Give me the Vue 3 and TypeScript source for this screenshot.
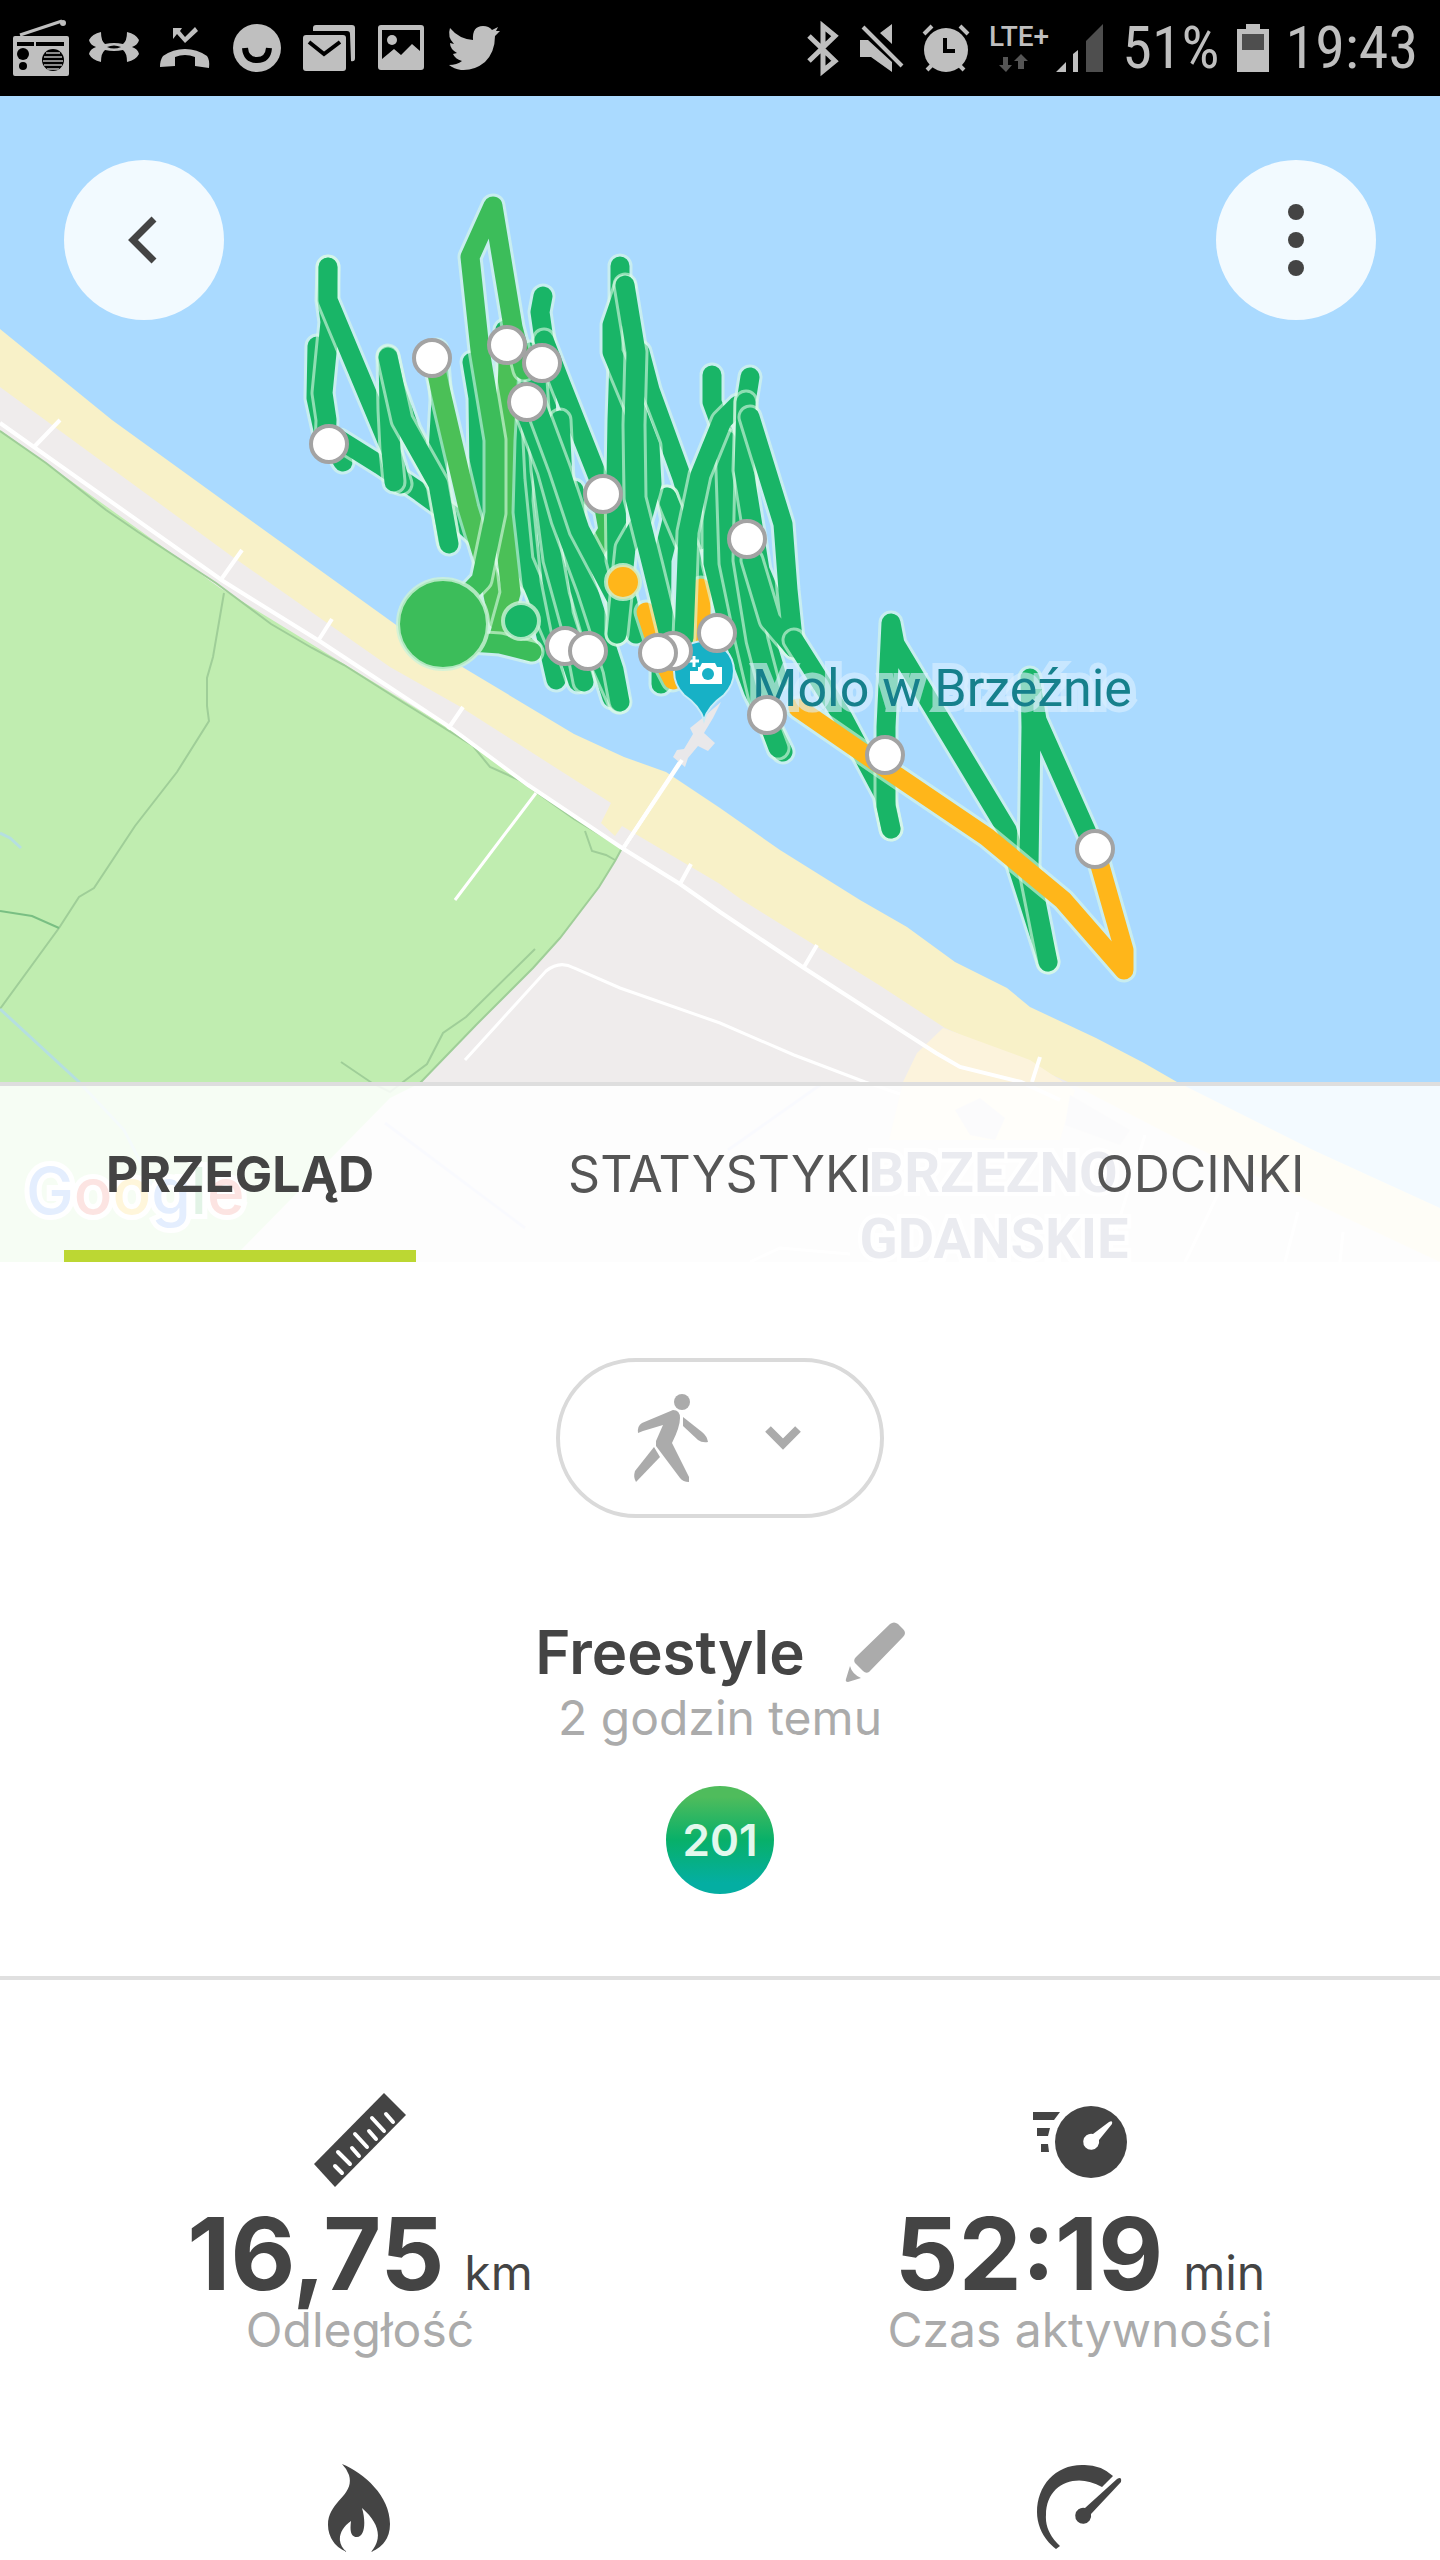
<script setup lang="ts">
import { ref } from 'vue'

interface Track {
  color: string
  points: string
}

const GREEN = '#19b567'
const FRESH = '#3cbd5a'
const LIME = '#4bc057'
const AMBER = '#ffb61a'

const tracks: Track[] = [
  { color: GREEN, points: '317,346 316,398 323,430 343,462' },
  { color: GREEN, points: '340,440 380,465 420,492 460,521 498,556 540,590 560,610' },
  { color: GREEN, points: '326,446 327,420 323,393 330,322 327,300 328,267' },
  { color: GREEN, points: '328,267 328,300 338,324 390,448 401,484' },
  { color: GREEN, points: '394,482 391,450 389,410 388,356 394,385 410,430 437,482' },
  { color: GREEN, points: '437,350 441,400 437,470 443,510 448,541' },
  { color: GREEN, points: '388,357 402,420 438,484 449,544' },
  { color: GREEN, points: '472,362 478,398 479,470 486,560' },
  { color: GREEN, points: '530,352 520,398 528,470 528,540 540,610 556,680' },
  { color: GREEN, points: '505,330 510,400 514,480 522,560 556,640' },
  { color: GREEN, points: '543,296 540,312 544,340 547,420 544,500 552,580 564,640 578,682' },
  { color: GREEN, points: '544,340 561,384 603,490 616,526 617,600' },
  { color: GREEN, points: '536,380 542,470 554,560 576,640 584,682' },
  { color: FRESH, points: '590,496 604,508 608,530 590,560' },
  { color: GREEN, points: '574,490 576,540 584,610 600,660 612,698' },
  { color: GREEN, points: '560,420 564,500 580,590 600,660 619,702' },
  { color: GREEN, points: '525,410 548,470 562,520 588,590 614,670 620,702' },
  { color: GREEN, points: '534,400 560,470 580,530 617,600 617,634' },
  { color: GREEN, points: '620,266 620,330 617,420 616,480 617,560 636,634' },
  { color: GREEN, points: '640,352 650,390 682,478 700,540' },
  { color: GREEN, points: '667,497 672,520 662,560 661,684' },
  { color: GREEN, points: '667,497 673,512 690,552 700,600' },
  { color: AMBER, points: '646,612 660,655 673,680' },
  { color: GREEN, points: '625,287 612,325 612,352 637,412 650,446 652,484 642,520 626,548 617,634' },
  { color: GREEN, points: '625,285 636,352 634,425 635,498 652,566 670,640' },
  { color: GREEN, points: '712,375 712,402 726,440 742,530 760,620 778,680' },
  { color: AMBER, points: '701,588 701,645' },
  { color: GREEN, points: '716,440 713,478 713,563 727,620 753,690 783,752' },
  { color: GREEN, points: '726,440 730,563 746,640 760,700 778,748' },
  { color: GREEN, points: '738,405 722,421 700,475 688,532 684,638' },
  { color: GREEN, points: '750,377 746,402 746,470 744,560 757,640 770,690' },
  { color: GREEN, points: '746,402 744,470 760,570 792,646' },
  { color: GREEN, points: '750,417 783,524 788,590 794,648 770,620 752,560' },
  { color: GREEN, points: '794,640 842,716 884,795 891,829' },
  { color: GREEN, points: '891,829 886,806 886,727 891,623 895,644 1007,830 1018,868 1048,962' },
  { color: GREEN, points: '1048,962 1029,866 1031,727 1030,678 1037,720 1093,846' },
  { color: AMBER, points: '1095,848 1124,950 1124,970 1063,900 987,837 885,768 798,708' },
  { color: LIME, points: '434,360 440,388 468,508 490,580 498,620 530,650' },
  { color: LIME, points: '509,350 504,440 502,513 511,593 498,640' },
  { color: FRESH, points: '440,640 500,644 532,652' },
  { color: FRESH, points: '443,620 481,580 495,513 495,440 480,350 470,257 493,206 513,327 524,370' }
]

const markers: [number, number][] = [
  [329, 444], [432, 358], [507, 345], [542, 363], [527, 402], [603, 494], [747, 539],
  [565, 646], [588, 651], [673, 651], [658, 653], [717, 633], [767, 715], [885, 755], [1095, 849]
]

const tabs = ['PRZEGLĄD', 'STATYSTYKI', 'ODCINKI']
const activeTab = ref(0)
</script>

<template>
  <div class="screen">
    <header class="status">
      <div class="status-group">
        <svg width="57" height="60" viewBox="12 18 57 60" fill="#bfbfbf">
          <path d="M20 35 62 21" stroke="#bfbfbf" stroke-width="3" />
          <circle cx="63" cy="23" r="3" />
          <path fill-rule="evenodd" d="M15 36H67Q69 36 69 38V74Q69 76 67 76H15Q13 76 13 74V38Q13 36 15 36ZM17 42V46H34V42ZM36 42V46H64V42Z" />
          <circle cx="23" cy="54" r="6" fill="#000" />
          <circle cx="23" cy="66" r="4" fill="#000" />
          <circle cx="53" cy="60" r="11" fill="#000" />
          <path d="M46 53H60M44 57H62M43 61H63M44 65H62M47 69H59" stroke="#8a8a8a" stroke-width="2" />
        </svg>
        <svg width="50" height="60" viewBox="88 18 50 60" fill="#bfbfbf">
          <path fill-rule="evenodd" d="M100 32Q100 41 104 44Q113 42 122 44Q126 41 126 32Q135 34 138 40Q137 45 131 47Q137 49 138 54Q135 60 126 62Q126 53 122 50Q113 52 104 50Q100 53 100 62Q91 60 88 54Q89 49 95 47Q89 45 88 40Q91 34 100 32ZM106 47Q113 50 120 47Q113 44 106 47Z" />
        </svg>
        <svg width="52" height="60" viewBox="159 18 52 60" fill="#bfbfbf">
          <path d="M173 28H182L180 31 185 37 195 27 198 31 185 43 177 34 173 39Z" />
          <path d="M160 67Q160 60 163 56Q173 49 185 49Q197 49 207 56Q210 60 209 68L195 66V57Q185 53 175 57V66Z" />
        </svg>
        <svg width="52" height="60" viewBox="231 18 52 60">
          <circle cx="257" cy="48" r="24" fill="#bfbfbf" />
          <path d="M245 48Q246 60 257 60Q268 60 269 48" fill="none" stroke="#000" stroke-width="6" />
        </svg>
        <svg width="53" height="60" viewBox="303 18 53 60">
          <path d="M313 31V28Q313 25 316 25H352Q355 25 355 28V58Q355 62 351 61L350 34Q350 31 347 31Z" fill="#bfbfbf" />
          <rect x="303" y="35" width="43" height="36" rx="3" fill="#bfbfbf" />
          <path d="M309 42 324 54 340 42" fill="none" stroke="#000" stroke-width="4" />
        </svg>
        <svg width="50" height="60" viewBox="376 18 50 60">
          <path fill="#bfbfbf" fill-rule="evenodd" d="M381 25H421Q424 25 424 28V67Q424 70 421 70H381Q378 70 378 67V28Q378 25 381 25ZM382 30V59L394 49 401 55 412 44 420 51V30Z" />
          <circle cx="392" cy="40" r="5" fill="#bfbfbf" />
        </svg>
        <svg width="54" height="60" viewBox="446 18 54 60" fill="#bfbfbf">
          <path d="M450 28Q459 39 473 40Q472 26 483 26Q489 26 492 30L498 27 496 31 500 31 495 36Q495 52 485 62Q474 71 461 70Q454 69 449 65Q457 65 462 61Q455 59 453 54L457 53Q450 49 450 43L454 44Q447 37 450 28Z" />
        </svg>
      </div>
      <div class="status-group status-right">
        <svg width="36" height="60" viewBox="804 18 36 60">
          <path d="M807 36 833 61 821 71V26L833 36 807 61" fill="none" stroke="#bfbfbf" stroke-width="5" />
        </svg>
        <svg width="46" height="60" viewBox="860 18 46 60" fill="#bfbfbf">
          <path d="M881 33 893 24V44ZM861 40H869L893 62V72L872 57H861Z" />
          <path d="M864 27 903 66" stroke="#bfbfbf" stroke-width="4" />
        </svg>
        <svg width="50" height="60" viewBox="923 18 50 60">
          <path d="M925 34 933 26M961 26 969 34M928 70 934 64M965 70 959 64" stroke="#bfbfbf" stroke-width="4" />
          <circle cx="947" cy="50" r="22" fill="#bfbfbf" />
          <path d="M946 38V51H956" fill="none" stroke="#000" stroke-width="4" />
        </svg>
        <svg class="network" width="116" height="60" viewBox="990 18 116 60">
          <text x="990" y="46" class="lte">LTE+</text>
          <path d="M1004 57H1009V65H1013L1007 72 1000 65H1004ZM1019 69H1025V61H1029L1022 54 1015 61H1019Z" fill="#555" />
          <path d="M1057 72H1067V62ZM1074 72H1079V50L1074 54Z" fill="#bfbfbf" />
          <path d="M1087 72H1104V24L1087 41Z" fill="#4e4e4e" />
        </svg>
        <span class="status-text">51%</span>
        <svg width="32" height="60" viewBox="1237 18 32 60">
          <path d="M1246 24H1260V29H1269V72H1237V29H1246Z" fill="#bfbfbf" />
          <rect x="1242" y="34" width="22" height="16" fill="#4e4e4e" />
        </svg>
        <time class="status-text">19:43</time>
      </div>
    </header>

    <section class="map" aria-label="Mapa">
      <svg class="map-canvas" viewBox="0 96 1440 1166">
        <rect y="96" width="1440" height="1166" fill="#aadaff" />
        <path fill="#f8f1c8" d="M0 329 112 420 253 522 399 627 459 665 574 734 624 757 666 772 720 808 780 850 860 900 907 927 955 962 1007 988 1030 1007 1096 1038 1144 1063 1177 1082 1313 1150 1440 1208V1262H0Z" />
        <path fill="#efecec" d="M0 387 230 555 390 667 459 706 611 803 601 823 615 836 622 826 720 884 742 900 879 985 945 1028 1068 1082 1180 1140 1440 1262H0Z" />
        <path fill="#fcf3dc" d="M943 1028 917 1053 903 1082 889 1140 1060 1140 1075 1090 1030 1060Z" />
        <path fill="#c0edb0" d="M0 430 220 588 450 729 574 818 622 848 615 861 599 887 560 938 533 968 477 1024 420 1083 390 1098 241 1250 235 1262H0Z" />
        <g fill="none" stroke="#9fce98" stroke-width="2">
          <path d="M0 431 46 463 106 510 138 532 216 583 271 624 312 648 344 665 404 703 473 746 490 767 519 780 574 819 622 848 615 861 599 887 560 938 533 968 477 1024 420 1083" />
          <path d="M224 593 213 657 207 678V706L209 721 177 772 135 826 94 888 79 897 59 928 0 1009" />
          <path d="M585 831 592 851 606 855 615 860M535 949 466 1017 443 1033 427 1064 403 1082 390 1092 372 1083 341 1062" />
          <path d="M0 911 32 916 59 928" stroke="#79bf83" />
        </g>
        <path d="M0 833 10 838 21 848M0 1009 78 1081 124 1130 160 1200" fill="none" stroke="#b5dfe0" stroke-width="3" />
        <g fill="none" stroke="#fff" stroke-width="4">
          <path d="M0 423 223 581 321 642 448 726 528 785 622 848 680 884 720 912 804 968 936 1053 960 1067 1021 1082 1060 1100" />
          <path d="M34 447 60 420M220 581 242 550M318 641 332 619M448 729 463 707M680 884 691 864M804 967 817 945M1032 1082 1040 1057M624 847 680 762" />
          <path d="M536 793 455 900M465 1060 546 971Q560 960 574 968L620 988 720 1023 794 1055 865 1082 900 1094" stroke-width="3" />
          <path d="M1145 1135 1110 1250M1220 1190 1185 1262M1298 1212 1285 1262M1343 1232 1340 1262M750 1262 780 1248 850 1254" stroke-width="3" />
        </g>
        <path d="M385 1123 525 1228M728 1150 820 1085" fill="none" stroke="#d6dcf6" stroke-width="3" />
        <path fill="#e3e4e6" d="M955 1110 980 1098 1005 1118 995 1140 970 1135ZM1070 1095 1130 1130 1120 1145 1065 1125Z" />
        <path fill="#e9e8ea" d="M721 702 713 718 704 733 715 743 708 751 698 746 688 758 685 767 673 757 677 750 684 749 693 734 690 728 700 720Z" />
        <path d="M624 847 682 760" stroke="#fff" stroke-width="4" />

        <g fill="none" stroke-linejoin="round" stroke-linecap="round">
          <template v-for="(track, i) in tracks" :key="i">
            <polyline :points="track.points" class="track-halo" />
            <polyline :points="track.points" class="track" :stroke="track.color" />
          </template>
        </g>
        <circle cx="443" cy="624" r="45" fill="#3cbd5a" class="dot" />
        <circle cx="521" cy="621" r="18" fill="#19b567" class="dot" />
        <circle cx="623" cy="582" r="17" fill="#ffb61a" class="dot" />

        <path fill="#17b1c6" stroke="#c7ecf7" stroke-width="2" d="M704 720Q700 706 684 695Q674 685 674 671A30 30 0 0 1 734 671Q734 685 724 695Q708 706 704 720Z" />
        <path fill="#fff" d="M698 667H700L702 663H715L717 667H722V684H690V671H698Z" />
        <path d="M694 656V667M689 661H699" stroke="#fff" stroke-width="3" />
        <circle cx="708" cy="674" r="6" fill="#17b1c6" />
        <text x="752" y="706" class="poi">Molo w Brzeźnie</text>
        <circle v-for="([x, y], i) in markers" :key="i" :cx="x" :cy="y" r="18" class="marker" />

        <text x="993" y="1192" class="district">BRZEZNO</text>
        <text x="994" y="1258" class="district">GDANSKIE</text>
        <text x="26" y="1214" class="google"><tspan fill="#4285f4">G</tspan><tspan fill="#ea4335">o</tspan><tspan fill="#fbbc05">o</tspan><tspan fill="#4285f4">g</tspan><tspan fill="#34a853">l</tspan><tspan fill="#ea4335">e</tspan></text>
      </svg>

      <div class="map-actions">
        <button class="round" type="button" aria-label="Wstecz">
          <svg width="40" height="60" viewBox="124 210 40 60">
            <path d="M154 219 133 240 154 261" fill="none" stroke="#444" stroke-width="7" />
          </svg>
        </button>
        <button class="round" type="button" aria-label="Więcej">
          <svg width="20" height="76" viewBox="0 0 20 76" fill="#444">
            <circle cx="10" cy="10" r="8" />
            <circle cx="10" cy="38" r="8" />
            <circle cx="10" cy="66" r="8" />
          </svg>
        </button>
      </div>

      <nav class="tabs">
        <button
          v-for="(tab, i) in tabs"
          :key="tab"
          type="button"
          class="tab"
          :class="{ active: i === activeTab }"
          @click="activeTab = i"
        >{{ tab }}</button>
      </nav>
    </section>

    <main>
      <section class="summary">
        <button class="activity" type="button" aria-label="Rodzaj aktywności">
          <svg width="76" height="92" viewBox="634 1391 76 92" fill="#ababab">
            <circle cx="683" cy="1401" r="8" />
            <path d="M674 1409Q681 1409 681 1417Q681 1426 673 1442L690 1476V1481Q684 1481 681 1477L657 1445V1440L664 1424 644 1430 639 1432Q638 1425 643 1422Z" />
            <path d="M684 1416 703 1431Q708 1435 709 1441Q703 1442 699 1439L684 1425Z" />
            <path d="M655 1446 661 1456 637 1481Q634 1476 636 1470Z" />
          </svg>
          <svg width="40" height="28" viewBox="763 1424 40 28">
            <path d="M768 1429 783 1444 798 1429" fill="none" stroke="#ababab" stroke-width="8" />
          </svg>
        </button>
        <div class="title-row">
          <h1>Freestyle</h1>
          <button class="edit" type="button" aria-label="Edytuj">
            <svg width="60" height="60" viewBox="846 1623 60 60" fill="#ababab">
              <path d="M891 1625Q895 1622 899 1625L904 1630Q908 1634 904 1638L870 1673Q867 1675 864 1672L856 1664Q854 1661 857 1658Z" />
              <path d="M851 1667Q853 1675 862 1679L849 1683Q846 1683 847 1680Z" />
            </svg>
          </button>
        </div>
        <p class="ago">2 godzin temu</p>
        <span class="badge">201</span>
      </section>

      <section class="stats">
        <div class="stat">
          <svg width="96" height="96" viewBox="313 2091 96 96">
            <path d="M385 2092 407 2114 336 2186 315 2163Z" fill="#444" />
            <path d="M336 2165 343 2172M339 2151 351 2163M353 2147 360 2155M356 2133 368 2146M370 2130 377 2138M373 2117 385 2130M387 2113 394 2121" stroke="#fff" stroke-width="4" stroke-linecap="round" />
          </svg>
          <p class="value">16,75 <span>km</span></p>
          <p class="label">Odległość</p>
        </div>
        <div class="stat">
          <svg width="96" height="96" viewBox="1031 2091 96 96" fill="#444">
            <circle cx="1090" cy="2141" r="36" />
            <path d="M1032 2111H1059L1053 2119H1032ZM1036 2127H1049L1047 2135H1036ZM1040 2143H1047L1048 2151H1040Z" />
            <path fill="#fff" d="M1108 2121Q1112 2119 1111 2123L1098 2139A8 8 0 1 1 1092 2133Z" />
          </svg>
          <p class="value">52:19 <span>min</span></p>
          <p class="label">Czas aktywności</p>
        </div>
        <div class="stat">
          <svg width="96" height="96" viewBox="312 2459 96 96" fill="#444">
            <path d="M342 2463C364 2472 390 2495 390 2523C390 2537 383 2546 371 2551C383 2537 379 2522 362 2507C366 2520 365 2536 357 2536C350 2536 350 2528 351 2520C338 2529 336 2543 347 2551C334 2546 328 2535 328 2524C328 2500 355 2495 349 2474Q347 2468 342 2463Z" />
          </svg>
        </div>
        <div class="stat">
          <svg width="96" height="96" viewBox="1032 2459 96 96" fill="#444">
            <path d="M1113 2475Q1100 2463 1082 2464C1055 2464 1037 2485 1037 2511C1037 2526 1045 2540 1056 2548L1060 2545C1051 2537 1045 2526 1046 2514C1046 2482 1077 2471 1102 2486Z" />
            <path d="M1117 2478Q1122 2475 1121 2481L1091 2513A8 8 0 1 1 1085 2507Z" />
          </svg>
        </div>
      </section>
    </main>
  </div>
</template>

<style>
body {
  margin: 0;
  background: #fff;
}
</style>

<style scoped>
.screen {
  min-height: 100vh;
  font-family: Inter, "Liberation Sans", sans-serif;
  color: #444;
  overflow-x: hidden;
}
button {
  border: 0;
  padding: 0;
  background: none;
  font-family: inherit;
  color: inherit;
}
svg {
  display: block;
}
p,
h1 {
  margin: 0;
}
.status {
  display: flex;
  justify-content: space-between;
  align-items: center;
  height: 96px;
  padding: 0 22px 0 12px;
  background: #000;
}
.status-group {
  display: flex;
  align-items: center;
  gap: 20px;
}
.status-right {
  gap: 17px;
}
.status-text {
  font: 400 60px/72px "Roboto Condensed", "Liberation Sans Narrow", Roboto, sans-serif;
  color: #bfbfbf;
}
.network {
  overflow: visible;
}
.lte {
  font: 500 28px Roboto, sans-serif;
  fill: #bfbfbf;
}
.map {
  position: relative;
}
.map-canvas {
  width: 100%;
  height: auto;
  overflow: visible;
}
.track-halo {
  stroke: #dcfae6;
  stroke-opacity: 0.6;
  stroke-width: 25;
}
.track {
  stroke-width: 19;
}
.dot {
  stroke: #cdf2d8;
  stroke-opacity: 0.8;
  stroke-width: 4;
}
.marker {
  fill: #fff;
  stroke: #a3a3a3;
  stroke-width: 4;
}
.poi {
  font: 400 52px Roboto, sans-serif;
  fill: #16808c;
  stroke: #dcf0ff;
  stroke-opacity: 0.6;
  stroke-width: 12;
  paint-order: stroke;
}
.district {
  font: 700 56px Roboto, sans-serif;
  fill: #6c7394;
  text-anchor: middle;
  stroke: #fff;
  stroke-width: 8;
  paint-order: stroke;
}
.google {
  font: 500 64px Inter, sans-serif;
  stroke: #fff;
  stroke-width: 10;
  paint-order: stroke;
}
.map-actions {
  position: absolute;
  top: 64px;
  left: 64px;
  right: 64px;
  display: flex;
  justify-content: space-between;
}
.round {
  display: flex;
  align-items: center;
  justify-content: center;
  width: 160px;
  height: 160px;
  border-radius: 50%;
  background: rgba(255, 255, 255, 0.85);
}
.tabs {
  position: absolute;
  left: 0;
  right: 0;
  bottom: 0;
  display: flex;
  height: 176px;
  border-top: 4px solid #dedede;
  background: rgba(255, 255, 255, 0.86);
}
.tab {
  flex: 1;
  margin: 0 64px;
  border-top: 12px solid transparent;
  border-bottom: 12px solid transparent;
  font-size: 50px;
  line-height: 60px;
  color: #555;
  white-space: nowrap;
}
.tab.active {
  border-bottom-color: #bcd733;
  font-weight: 700;
  color: #444;
}
.summary {
  display: flex;
  flex-direction: column;
  align-items: center;
  padding: 96px 0 82px;
  border-bottom: 4px solid #e0e0e0;
}
.activity {
  display: flex;
  align-items: center;
  justify-content: center;
  gap: 54px;
  box-sizing: border-box;
  width: 328px;
  height: 160px;
  padding-right: 4px;
  border: 4px solid #dadada;
  border-radius: 80px;
}
.title-row {
  display: flex;
  align-items: center;
  gap: 40px;
  margin-top: 102px;
}
h1 {
  font-size: 60px;
  line-height: 64px;
  font-weight: 600;
}
.ago,
.label {
  font-size: 48px;
  line-height: 52px;
  color: #ababab;
}
.ago {
  margin-top: 8px;
}
.badge {
  display: flex;
  align-items: center;
  justify-content: center;
  width: 108px;
  height: 108px;
  margin-top: 42px;
  border-radius: 50%;
  background: linear-gradient(#4fbc5c 10%, #08b069 50%, #04aea2 90%);
  color: #e2f8ed;
  font-size: 44px;
  font-weight: 600;
}
.stats {
  display: grid;
  grid-template-columns: 1fr 1fr;
  row-gap: 104px;
  padding-top: 112px;
}
.stat {
  display: flex;
  flex-direction: column;
  align-items: center;
}
.value {
  display: flex;
  align-items: baseline;
  gap: 20px;
  margin-top: 16px;
  font-size: 100px;
  line-height: 100px;
  font-weight: 700;
  white-space: nowrap;
}
.value span {
  font-size: 48px;
  line-height: 52px;
  font-weight: 400;
}
</style>
